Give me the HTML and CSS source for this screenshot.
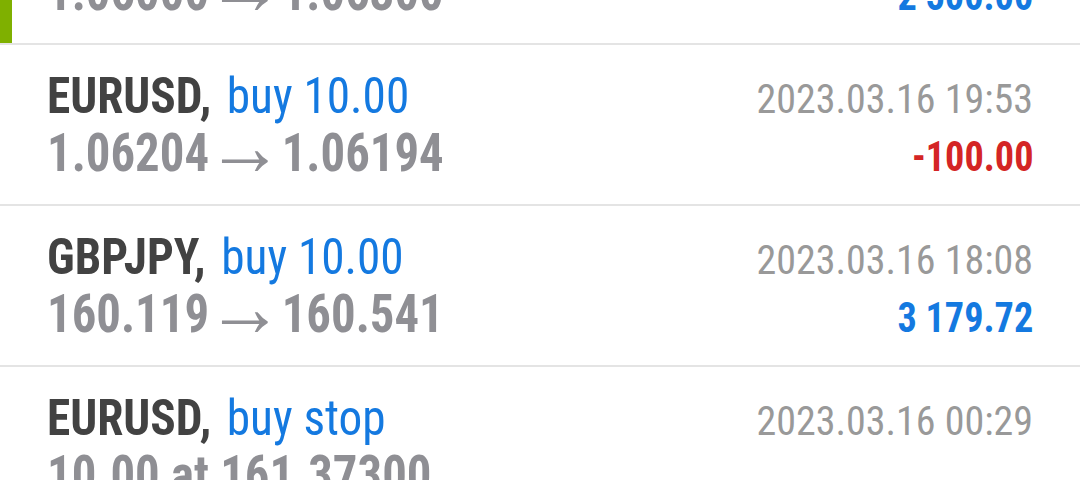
FILE: index.html
```html
<!DOCTYPE html>
<html>
<head>
<meta charset="utf-8">
<link rel="stylesheet" href="styles.css">
</head>
<body>
<div class="list">
  <div class="row active">
    <div class="line">
      <span class="title"><b class="sym">EURUSD,</b> <span class="op">buy 10.00</span></span>
      <span class="date">2023.03.16 20:14</span>
    </div>
    <div class="line">
      <span class="price">1.06000<span class="arrow">→</span>1.06300</span>
      <span class="profit pos">2 500.00</span>
    </div>
  </div>
  <div class="row">
    <div class="line">
      <span class="title"><b class="sym">EURUSD,</b> <span class="op">buy 10.00</span></span>
      <span class="date">2023.03.16 19:53</span>
    </div>
    <div class="line">
      <span class="price">1.06204<span class="arrow">→</span>1.06194</span>
      <span class="profit neg">-100.00</span>
    </div>
  </div>
  <div class="row">
    <div class="line">
      <span class="title"><b class="sym">GBPJPY,</b> <span class="op">buy 10.00</span></span>
      <span class="date">2023.03.16 18:08</span>
    </div>
    <div class="line">
      <span class="price">160.119<span class="arrow">→</span>160.541</span>
      <span class="profit pos">3 179.72</span>
    </div>
  </div>
  <div class="row">
    <div class="line">
      <span class="title"><b class="sym">EURUSD,</b> <span class="op">buy stop</span></span>
      <span class="date">2023.03.16 00:29</span>
    </div>
    <div class="line">
      <span class="price">10.00 at 161.37300</span>
      <span class="profit"></span>
    </div>
  </div>
</div>
</body>
</html>
```

FILE: styles.css
```css
html, body {
  margin: 0;
  padding: 0;
  background: #ffffff;
  overflow: hidden;
}
body {
  font-family: "Roboto Condensed", "Roboto", "Liberation Sans", sans-serif;
}
.list {
  display: flex;
  flex-direction: column;
  margin-top: -116px;
}
.row {
  display: flex;
  flex-direction: column;
  padding: 23px 47px 21px 47px;
  height: 115px;
  border-bottom: 2px solid #e4e4e4;
}
.row.active {
  box-shadow: inset 12px 0 0 #7fb000;
}
.line {
  display: flex;
  justify-content: space-between;
  align-items: baseline;
  height: 57px;
  line-height: 57px;
}
.title {
  display: inline-block;
  font-size: 50px;
  white-space: nowrap;
  transform: scaleX(0.945);
  transform-origin: left center;
}
.sym {
  font-weight: 700;
  color: #424242;
}
.op {
  font-weight: 400;
  color: #1479e0;
  margin-left: 5px;
}
.price {
  display: inline-block;
  font-size: 53px;
  font-weight: 700;
  color: #8f8f94;
  white-space: nowrap;
  transform: scaleX(0.92);
  transform-origin: left center;
}
.arrow {
  display: inline-block;
  font-size: 84px;
  font-weight: 400;
  line-height: 0;
  vertical-align: -4px;
  margin: 0 -2px 0 -3px;
}
.date {
  font-size: 40px;
  color: #999999;
  white-space: nowrap;
}
.profit {
  display: inline-block;
  font-size: 42px;
  font-weight: 700;
  white-space: nowrap;
  transform: scaleX(0.91);
  transform-origin: right center;
}
.profit.pos { color: #1479e0; }
.profit.neg { color: #d42525; }
```
